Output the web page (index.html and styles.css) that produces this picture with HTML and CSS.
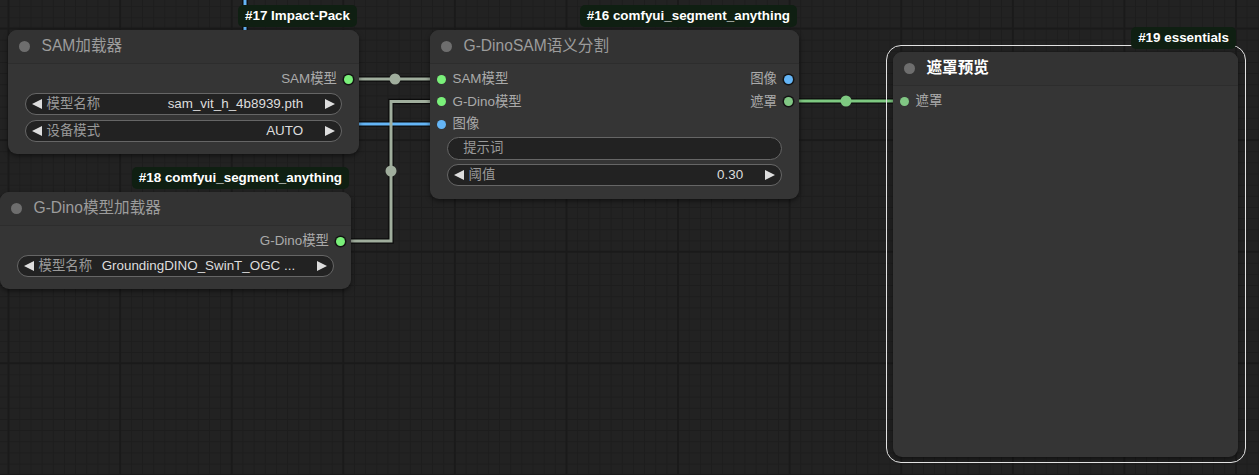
FILE: index.html
```html
<!DOCTYPE html>
<html lang="zh">
<head>
<meta charset="utf-8">
<title>ComfyUI graph</title>
<link rel="stylesheet" href="styles.css">
</head>
<body>
<div class="canvas">
  <svg class="links" width="1259" height="475" viewBox="0 0 1259 475">
    <g class="edge">
      <path d="M245,-5 V124 H441"/>
      <path d="M349,79 H441"/>
      <path d="M341,241 H391 V101.5 H441"/>
      <path d="M788,101 H904"/>
    </g>
    <path class="l-blue" d="M245,-5 V124 H441"/>
    <path class="l-grey" d="M349,79 H441"/>
    <path class="l-grey" d="M341,241 H391 V101.5 H441"/>
    <path class="l-green" d="M788,101 H904"/>
    <circle class="m-grey" cx="395" cy="79" r="5.5"/>
    <circle class="m-grey" cx="391" cy="171" r="5.5"/>
    <circle class="m-green" cx="846" cy="101" r="5.5"/>
  </svg>

  <div class="node n17">
    <div class="badge">#17 Impact-Pack</div>
    <div class="title"><span class="tdot"></span><span class="tt">SAM加载器</span></div>
    <div class="body">
      <div class="slots">
        <div class="col"></div>
        <div class="col">
          <div class="slot out"><span>SAM模型</span><i class="dot c-green ring"></i></div>
        </div>
      </div>
      <div class="widgets">
        <div class="widget"><i class="al"></i><span class="wl">模型名称</span><span class="wv">sam_vit_h_4b8939.pth</span><i class="ar"></i></div>
        <div class="widget"><i class="al"></i><span class="wl">设备模式</span><span class="wv">AUTO</span><i class="ar"></i></div>
      </div>
    </div>
  </div>

  <div class="node n16">
    <div class="badge">#16 comfyui_segment_anything</div>
    <div class="title"><span class="tdot"></span><span class="tt">G-DinoSAM语义分割</span></div>
    <div class="body">
      <div class="slots">
        <div class="col">
          <div class="slot in"><i class="dot c-green"></i><span>SAM模型</span></div>
          <div class="slot in"><i class="dot c-green"></i><span>G-Dino模型</span></div>
          <div class="slot in"><i class="dot c-blue"></i><span>图像</span></div>
        </div>
        <div class="col">
          <div class="slot out"><span>图像</span><i class="dot c-blue ring"></i></div>
          <div class="slot out"><span>遮罩</span><i class="dot c-mask ring"></i></div>
        </div>
      </div>
      <div class="widgets">
        <div class="widget text"><span class="wl">提示词</span></div>
        <div class="widget"><i class="al"></i><span class="wl">阈值</span><span class="wv">0.30</span><i class="ar"></i></div>
      </div>
    </div>
  </div>

  <div class="node n18">
    <div class="badge">#18 comfyui_segment_anything</div>
    <div class="title"><span class="tdot"></span><span class="tt">G-Dino模型加载器</span></div>
    <div class="body">
      <div class="slots">
        <div class="col"></div>
        <div class="col">
          <div class="slot out"><span>G-Dino模型</span><i class="dot c-green ring"></i></div>
        </div>
      </div>
      <div class="widgets">
        <div class="widget"><i class="al"></i><span class="wl">模型名称</span><span class="wv">GroundingDINO_SwinT_OGC ...</span><i class="ar"></i></div>
      </div>
    </div>
  </div>

  <div class="node n19 selected">
    <div class="badge">#19 essentials</div>
    <div class="title"><span class="tdot"></span><span class="tt">遮罩预览</span></div>
    <div class="body">
      <div class="slots">
        <div class="col">
          <div class="slot in"><i class="dot c-mask"></i><span>遮罩</span></div>
        </div>
        <div class="col"></div>
      </div>
    </div>
  </div>
</div>
</body>
</html>
```

FILE: styles.css
```css
html, body {
  margin: 0;
  padding: 0;
  background: #222222;
  overflow: hidden;
}

.canvas {
  position: relative;
  width: 1259px;
  height: 475px;
  overflow: hidden;
  font-family: "Liberation Sans", "Noto Sans CJK SC", sans-serif;
  background-color: #222222;
  background-image:
    linear-gradient(90deg, #1a1a1a 2px, transparent 2px),
    linear-gradient(180deg, #1a1a1a 2px, transparent 2px),
    linear-gradient(90deg, #1d1d1d 1px, transparent 1px),
    linear-gradient(180deg, #1d1d1d 1px, transparent 1px);
  background-size:
    111.6px 100%,
    100% 111.6px,
    11.16px 100%,
    100% 11.16px;
  background-position:
    7.5px 0,
    0 27.5px,
    8.2px 0,
    0 6.2px;
}

.links {
  position: absolute;
  left: 0;
  top: 0;
}

.edge path {
  fill: none;
  stroke: rgba(0, 0, 0, 0.65);
  stroke-width: 5.5;
}

.l-blue, .l-grey, .l-green {
  fill: none;
  stroke-width: 3;
}

.l-blue { stroke: #64b5f6; }
.l-grey { stroke: #a0ae9d; }
.l-green { stroke: #7ec981; }

.m-grey { fill: #a0ae9d; }
.m-green { fill: #7ec981; }

.node {
  position: absolute;
  background: #353535;
  border-radius: 9px;
  box-shadow: 0 2px 5px rgba(0, 0, 0, 0.5);
  display: flex;
  flex-direction: column;
}

.n17 { left: 8px; top: 30px; width: 351px; height: 124px; }
.n16 { left: 430px; top: 30px; width: 369px; height: 169px; }
.n18 { left: 0; top: 192px; width: 351px; height: 97px; }
.n19 { left: 893px; top: 52px; width: 345px; height: 405px; }

.selected::before {
  content: "";
  position: absolute;
  left: -7px;
  top: -7px;
  right: -8px;
  bottom: -6px;
  border: 1px solid #e2e2e2;
  border-radius: 15px;
  pointer-events: none;
}

.badge {
  position: absolute;
  right: 2px;
  bottom: calc(100% + 3px);
  height: 22px;
  line-height: 22px;
  padding: 0 7px;
  border-radius: 5px;
  background: #0f1f12;
  color: #ffffff;
  font-size: 13.4px;
  font-weight: bold;
  white-space: nowrap;
  z-index: 2;
}

.title {
  height: 33px;
  flex: none;
  display: flex;
  align-items: center;
  gap: 12px;
  padding-left: 10.5px;
  border-bottom: 1px solid #2d2d2d;
  background: #333333;
  border-radius: 9px 9px 0 0;
  font-size: 15.6px;
  color: #9c9c9c;
  white-space: nowrap;
}

.tt {
  line-height: 1;
  margin-bottom: 0.5px;
}

.selected .title {
  color: #ffffff;
  font-weight: bold;
}

.tdot {
  width: 11px;
  height: 11px;
  border-radius: 50%;
  background: #6e6e6e;
  flex: none;
}

.body {
  padding-top: 4.5px;
  display: flex;
  flex-direction: column;
}

.slots {
  display: flex;
  justify-content: space-between;
}

.col {
  display: flex;
  flex-direction: column;
}

.slot {
  height: 22.3px;
  display: flex;
  align-items: center;
  font-size: 13.4px;
  color: #aaaaaa;
  white-space: nowrap;
}

.slot span,
.widget span {
  line-height: 1;
  margin-bottom: 1px;
}

.slot.in {
  padding-left: 6.5px;
  gap: 7px;
}

.slot.out {
  justify-content: flex-end;
  padding-right: 6.5px;
  gap: 6.5px;
}

.dot {
  width: 9px;
  height: 9px;
  border-radius: 50%;
  flex: none;
}

.ring {
  box-shadow: 0 0 0 1.5px #141414;
}

.c-green { background: #7af07a; }
.c-blue { background: #64b5f6; }
.c-mask { background: #81c784; }

.widgets {
  display: flex;
  flex-direction: column;
  gap: 4.5px;
  padding: 2px 16.7px 0;
}

.widget {
  box-sizing: border-box;
  height: 22.3px;
  border: 1px solid #666666;
  border-radius: 12px;
  background: #222222;
  display: flex;
  align-items: center;
  padding: 0 6.5px;
  font-size: 13.4px;
  white-space: nowrap;
  overflow: hidden;
}

.widget.text {
  padding-left: 15.5px;
}

.al, .ar {
  width: 0;
  height: 0;
  border-top: 5.5px solid transparent;
  border-bottom: 5.5px solid transparent;
  flex: none;
}

.al { border-right: 10.5px solid #dddddd; }
.ar { border-left: 10.5px solid #dddddd; }

.wl {
  color: #9a9a9a;
  margin-left: 4.4px;
}

.widget.text .wl {
  margin-left: 0;
}

.wv {
  color: #dddddd;
  margin-left: auto;
  margin-right: 21.7px;
}
```
